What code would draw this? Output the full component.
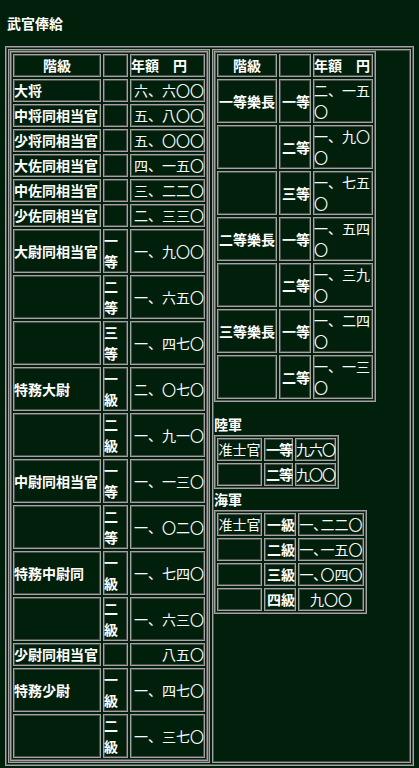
import React from 'react';

type Row = [string, string, string];

const rikuBody: Row[] = [
  ['大将', '', '六、六〇〇'],
  ['中将同相当官', '', '五、八〇〇'],
  ['少将同相当官', '', '五、〇〇〇'],
  ['大佐同相当官', '', '四、一五〇'],
  ['中佐同相当官', '', '三、二二〇'],
  ['少佐同相当官', '', '二、三三〇'],
  ['大尉同相当官', '一等', '一、九〇〇'],
  ['', '二等', '一、六五〇'],
  ['', '三等', '一、四七〇'],
  ['特務大尉', '一級', '二、〇七〇'],
  ['', '二級', '一、九一〇'],
  ['中尉同相当官', '一等', '一、一三〇'],
  ['', '二等', '一、〇二〇'],
  ['特務中尉同', '一級', '一、七四〇'],
  ['', '二級', '一、六三〇'],
  ['少尉同相当官', '', '八五〇'],
  ['特務少尉', '一級', '一、四七〇'],
  ['', '二級', '一、三七〇'],
];

const gakuchoRows: Row[] = [
  ['一等樂長', '一等', '二、一五〇'],
  ['', '二等', '一、九〇〇'],
  ['', '三等', '一、七五〇'],
  ['二等樂長', '一等', '一、五四〇'],
  ['', '二等', '一、三九〇'],
  ['三等樂長', '一等', '一、二四〇'],
  ['', '二等', '一、一三〇'],
];

const rikugunRows: Row[] = [
  ['准士官', '一等', '九六〇'],
  ['', '二等', '九〇〇'],
];

const kaigunRows: Row[] = [
  ['准士官', '一級', '一､二二〇'],
  ['', '二級', '一､一五〇'],
  ['', '三級', '一､〇四〇'],
  ['', '四級', '九〇〇'],
];

// old-style border="1" tables: light line with a darker inner edge
const tableCls =
  'border-separate border-spacing-[2px] border border-[#a3a3a3] shadow-[inset_0_0_0_1px_#5a5a5a]';
const cellCls = 'border border-[#a3a3a3] shadow-[inset_0_0_0_1px_#4e4e4e] p-0 leading-[21px]';

function App() {
  return (
    <div className="min-h-screen bg-[#01200b] text-white text-[14px] [font-family:'Noto_Sans_CJK_JP','Noto_Sans',sans-serif] pt-[13px] pl-[5px]">
      <div className="pl-[2px] font-bold leading-[21px] mb-[12px]">武官俸給</div>

      <table className={`${tableCls} w-[409px]`}>
        <tbody>
          <tr>
            {/* left column */}
            <td className="border border-[#a3a3a3] shadow-[inset_0_0_0_1px_#4e4e4e] p-px align-top">
              <table className={tableCls}>
                <tbody>
                  <tr className="font-bold">
                    <td className={`${cellCls} w-[88px] text-center`}>階級</td>
                    <td className={`${cellCls} w-[25px]`}></td>
                    <td className={`${cellCls} w-[75px] whitespace-nowrap`}>年額　円</td>
                  </tr>
                  {rikuBody.map((r, i) => (
                    <tr key={i}>
                      <td className={`${cellCls} font-bold whitespace-nowrap`}>{r[0]}</td>
                      <td className={`${cellCls} font-bold`}>{r[1]}</td>
                      <td className={`${cellCls} text-right whitespace-nowrap`}>{r[2]}</td>
                    </tr>
                  ))}
                </tbody>
              </table>
            </td>

            {/* right column */}
            <td className="border border-[#a3a3a3] shadow-[inset_0_0_0_1px_#4e4e4e] p-px align-top w-[199px]">
              <table className={tableCls}>
                <tbody>
                  <tr className="font-bold">
                    <td className={`${cellCls} w-[60px] text-center`}>階級</td>
                    <td className={`${cellCls} w-[32px]`}></td>
                    <td className={`${cellCls} w-[60px] whitespace-nowrap`}>年額　円</td>
                  </tr>
                  {gakuchoRows.map((r, i) => (
                    <tr key={i}>
                      <td className={`${cellCls} font-bold text-center whitespace-nowrap`}>{r[0]}</td>
                      <td className={`${cellCls} font-bold text-right whitespace-nowrap`}>{r[1]}</td>
                      <td className={`${cellCls}`}>{r[2]}</td>
                    </tr>
                  ))}
                </tbody>
              </table>

              <div className="mt-[12px] font-bold leading-[21px]">陸軍</div>
              <table className={tableCls}>
                <tbody>
                  {rikugunRows.map((r, i) => (
                    <tr key={i}>
                      <td className={`${cellCls} w-[45px] text-center whitespace-nowrap`}>{r[0]}</td>
                      <td className={`${cellCls} w-[29px] font-bold text-right whitespace-nowrap tracking-[-1px]`}>{r[1]}</td>
                      <td className={`${cellCls} w-[41px] text-right whitespace-nowrap tracking-[-1px]`}>{r[2]}</td>
                    </tr>
                  ))}
                </tbody>
              </table>

              <div className="font-bold leading-[21px]">海軍</div>
              <table className={tableCls}>
                <tbody>
                  {kaigunRows.map((r, i) => (
                    <tr key={i}>
                      <td className={`${cellCls} w-[45px] text-center whitespace-nowrap`}>{r[0]}</td>
                      <td className={`${cellCls} w-[32px] font-bold text-right whitespace-nowrap`}>{r[1]}</td>
                      <td className={`${cellCls} w-[66px] text-center whitespace-nowrap`}>{r[2]}</td>
                    </tr>
                  ))}
                </tbody>
              </table>
            </td>
          </tr>
        </tbody>
      </table>
    </div>
  );
}

export default App;
